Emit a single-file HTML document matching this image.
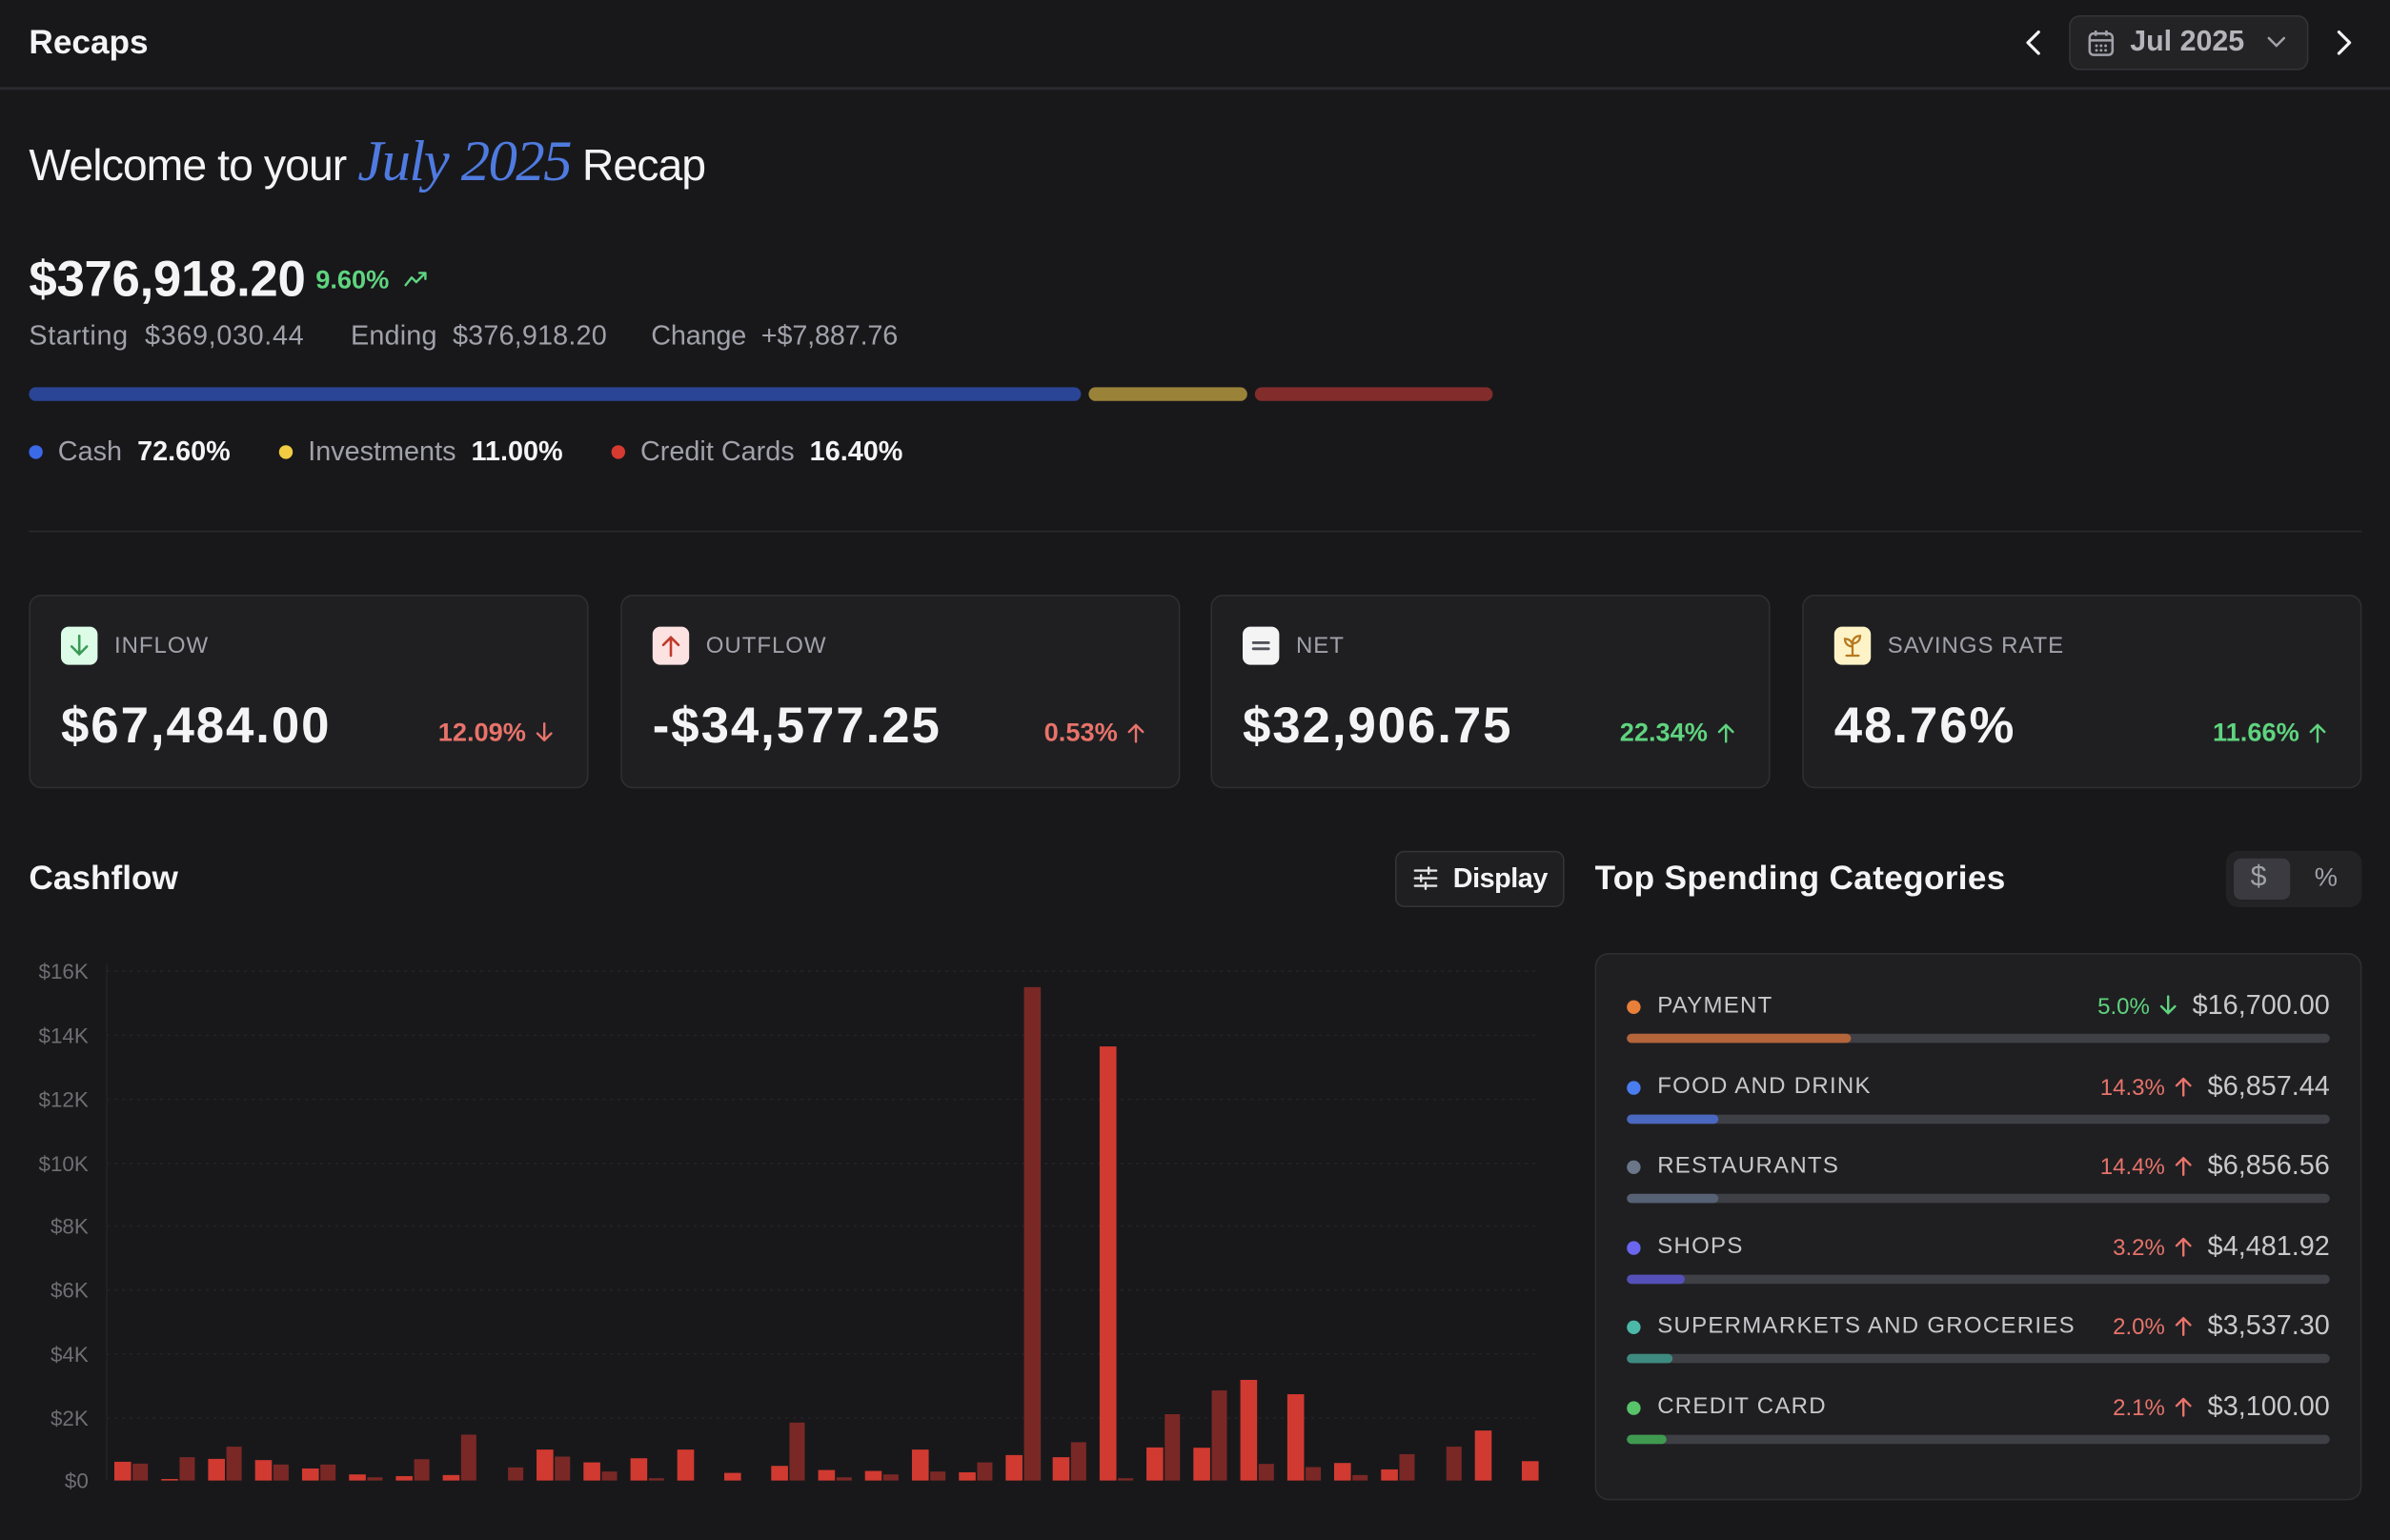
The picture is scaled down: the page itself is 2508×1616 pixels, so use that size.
<!DOCTYPE html>
<html><head><meta charset="utf-8"><style>
*{margin:0;padding:0;box-sizing:border-box}
html,body{width:2508px;height:1616px;background:#18181b;overflow:hidden}
#r{position:absolute;left:0;top:0;width:1568px;height:1010px;transform:scale(1.6);transform-origin:0 0;font-family:"Liberation Sans",Arial,sans-serif;color:#f4f4f5}
.a{position:absolute;white-space:nowrap}
.g{color:#a1a1aa}
.card{position:absolute;top:390px;width:367px;height:127px;background:#1f1f22;border:1px solid #2e2e33;border-radius:8px}
.ic{position:absolute;left:20px;top:20px;width:24px;height:25px;border-radius:5px}
.lab{position:absolute;left:55px;top:24px;font-size:15px;color:#a1a1aa;letter-spacing:.6px}
.val{position:absolute;left:20px;top:66px;font-size:33px;font-weight:bold;color:#f4f4f5;letter-spacing:1.2px}
.pct{position:absolute;right:22px;top:80px;font-size:17px;font-weight:bold}
.ar{display:inline-block;vertical-align:-2px;margin-left:6px}
.row{position:absolute;left:20px;right:20px;height:40px}
.row .dot{position:absolute;left:0;top:7px;width:9px;height:9px;border-radius:50%}
.row .nm{position:absolute;left:20px;top:2px;font-size:15px;color:#c8c8cc;letter-spacing:.8px}
.row .rt{position:absolute;right:0;top:0;font-size:18px;color:#c8c8cc}
.row .rt span{font-size:15px;margin-right:10px}
.row .tr{position:absolute;left:0;right:0;top:29px;height:6px;border-radius:3px;background:#3f3f46}
.row .fl{position:absolute;left:0;top:0;height:6px;border-radius:3px}
.red{color:#e8736a}.grn{color:#5fd47f}
</style></head><body><div id="r">
<svg width="0" height="0" style="position:absolute"><defs>
<symbol id="up" viewBox="0 0 12 14"><path d="M6 13 V2 M1.5 6.5 L6 2 L10.5 6.5" fill="none" stroke="currentColor" stroke-width="1.5" stroke-linecap="round" stroke-linejoin="round"/></symbol>
<symbol id="dn" viewBox="0 0 12 14"><path d="M6 1 V12 M1.5 7.5 L6 12 L10.5 7.5" fill="none" stroke="currentColor" stroke-width="1.5" stroke-linecap="round" stroke-linejoin="round"/></symbol>
</defs></svg>
<div class="a" style="left:19px;top:15px;font-size:22px;font-weight:bold">Recaps</div>
<svg class="a" style="left:1326px;top:19px" width="16" height="18" viewBox="0 0 16 18"><path d="M11 2 L4 9 L11 16" fill="none" stroke="#f4f4f5" stroke-width="2" stroke-linecap="round" stroke-linejoin="round"/></svg>
<div class="a" style="left:1357px;top:10px;width:157px;height:36px;background:#232326;border:1px solid #333338;border-radius:7px"></div>
<svg class="a" style="left:1369px;top:19px" width="18" height="19" viewBox="0 0 18 19"><rect x="1.5" y="3" width="15" height="14" rx="2.5" fill="none" stroke="#a1a1aa" stroke-width="1.6"/><line x1="1.5" y1="7.5" x2="16.5" y2="7.5" stroke="#a1a1aa" stroke-width="1.6"/><line x1="5.5" y1="1" x2="5.5" y2="4.5" stroke="#a1a1aa" stroke-width="1.6"/><line x1="12.5" y1="1" x2="12.5" y2="4.5" stroke="#a1a1aa" stroke-width="1.6"/><g fill="#a1a1aa"><circle cx="6" cy="11" r=".9"/><circle cx="9" cy="11" r=".9"/><circle cx="12" cy="11" r=".9"/><circle cx="6" cy="14" r=".9"/><circle cx="9" cy="14" r=".9"/><circle cx="12" cy="14" r=".9"/></g></svg>
<div class="a" style="left:1397px;top:17px;font-size:19px;color:#b4b4ba;font-weight:bold">Jul 2025</div>
<svg class="a" style="left:1486px;top:22px" width="14" height="10" viewBox="0 0 14 10"><path d="M2 3 L7 8 L12 3" fill="none" stroke="#a1a1aa" stroke-width="1.6" stroke-linecap="round"/></svg>
<svg class="a" style="left:1529px;top:19px" width="16" height="18" viewBox="0 0 16 18"><path d="M5 2 L12 9 L5 16" fill="none" stroke="#f4f4f5" stroke-width="2" stroke-linecap="round" stroke-linejoin="round"/></svg>
<div class="a" style="left:0;top:57px;width:1568px;height:2px;background:#2a2a2e"></div>

<div class="a" style="left:19px;top:84px;font-size:29px;letter-spacing:-.6px">Welcome to your <span style="font-family:'Liberation Serif',serif;font-style:italic;color:#4f7be0;font-size:38px;letter-spacing:-1px">July 2025</span> Recap</div>

<div class="a" style="left:19px;top:164px;font-size:33px;font-weight:bold;letter-spacing:-.2px">$376,918.20</div>
<div class="a grn" style="left:207px;top:174px;font-size:17px;font-weight:bold">9.60%</div>
<svg class="a" style="left:264px;top:176px" width="18" height="14" viewBox="0 0 18 14"><path d="M2 11 L6 6 L9 9 L15 3 M11 3 H15 V7" fill="none" stroke="#5fd47f" stroke-width="1.5" stroke-linecap="round" stroke-linejoin="round"/></svg>
<div class="a g" style="left:19px;top:210px;font-size:18px;letter-spacing:.4px">Starting&nbsp; $369,030.44</div>
<div class="a g" style="left:230px;top:210px;font-size:18px;letter-spacing:.1px">Ending&nbsp; $376,918.20</div>
<div class="a g" style="left:427px;top:210px;font-size:18px;letter-spacing:-.1px">Change&nbsp; +$7,887.76</div>

<div class="a" style="left:19px;top:254px;width:690px;height:9px;border-radius:5px;background:#2b4596"></div>
<div class="a" style="left:714px;top:254px;width:104px;height:9px;border-radius:5px;background:#9a8338"></div>
<div class="a" style="left:823px;top:254px;width:156px;height:9px;border-radius:5px;background:#832c2c"></div>

<div class="a" style="left:19px;top:292px;width:9px;height:9px;border-radius:50%;background:#3b6ae8"></div>
<div class="a" style="left:38px;top:286px;font-size:18px"><span class="g">Cash</span>&nbsp; <b>72.60%</b></div>
<div class="a" style="left:183px;top:292px;width:9px;height:9px;border-radius:50%;background:#f2cc42"></div>
<div class="a" style="left:202px;top:286px;font-size:18px"><span class="g">Investments</span>&nbsp; <b>11.00%</b></div>
<div class="a" style="left:401px;top:292px;width:9px;height:9px;border-radius:50%;background:#d73a30"></div>
<div class="a" style="left:420px;top:286px;font-size:18px"><span class="g">Credit Cards</span>&nbsp; <b>16.40%</b></div>
<div class="a" style="left:19px;top:348px;width:1530px;height:1px;background:#2a2a2e"></div>

<div class="card" style="left:19px"><div class="ic" style="background:#dcfce7"><svg width="24" height="25" viewBox="0 0 24 25"><path d="M12 6 V18 M7 13 L12 18 L17 13" fill="none" stroke="#3a9a55" stroke-width="1.6" stroke-linecap="round"/></svg></div><div class="lab">INFLOW</div><div class="val">$67,484.00</div><div class="pct red">12.09%<svg class="ar" width="12" height="15"><use href="#dn"/></svg></div></div>
<div class="card" style="left:407px"><div class="ic" style="background:#fde2e2"><svg width="24" height="25" viewBox="0 0 24 25"><path d="M12 19 V7 M7 12 L12 7 L17 12" fill="none" stroke="#c0392b" stroke-width="1.6" stroke-linecap="round"/></svg></div><div class="lab">OUTFLOW</div><div class="val">-$34,577.25</div><div class="pct red">0.53%<svg class="ar" width="12" height="15"><use href="#up"/></svg></div></div>
<div class="card" style="left:794px"><div class="ic" style="background:#f4f4f5"><svg width="24" height="25" viewBox="0 0 24 25"><path d="M7 10.5 H17 M7 14.5 H17" stroke="#52525b" stroke-width="1.8" stroke-linecap="round"/></svg></div><div class="lab">NET</div><div class="val">$32,906.75</div><div class="pct grn">22.34%<svg class="ar" width="12" height="15"><use href="#up"/></svg></div></div>
<div class="card" style="left:1182px"><div class="ic" style="background:#fef3c7"><svg width="24" height="25" viewBox="0 0 24 25"><path d="M12 19 V11 M12 13 C12 9 9 8 7 8 C7 11 9 13 12 13 M12 11 C12 8 14 6 17 6 C17 9 15 11 12 11 M8 19 H16" fill="none" stroke="#b7791f" stroke-width="1.4" stroke-linecap="round"/></svg></div><div class="lab">SAVINGS RATE</div><div class="val">48.76%</div><div class="pct grn">11.66%<svg class="ar" width="12" height="15"><use href="#up"/></svg></div></div>

<div class="a" style="left:19px;top:563px;font-size:22px;font-weight:bold">Cashflow</div>
<div class="a" style="left:915px;top:558px;width:111px;height:37px;background:#1f1f22;border:1px solid #333338;border-radius:6px"></div>
<svg class="a" style="left:926px;top:567px" width="18" height="18" viewBox="0 0 18 18"><g stroke="#e4e4e7" stroke-width="1.5" stroke-linecap="round"><path d="M2 4 H16 M2 9 H16 M2 14 H16"/><path d="M11 2 V6 M6 7 V11 M9 12 V16"/></g></svg>
<div class="a" style="left:953px;top:566px;font-size:18px;font-weight:bold;letter-spacing:-.3px">Display</div>

<div class="a" style="left:1046px;top:563px;font-size:22px;font-weight:bold;letter-spacing:.2px">Top Spending Categories</div>
<div class="a" style="left:1460px;top:558px;width:89px;height:37px;background:#232326;border-radius:8px"></div>
<div class="a" style="left:1465px;top:563px;width:37px;height:27px;background:#3a3a40;border-radius:5px"></div>
<div class="a" style="left:1476px;top:565px;font-size:19px;color:#a1a1aa">$</div>
<div class="a" style="left:1518px;top:566px;font-size:17px;color:#a1a1aa">%</div>

<div class="a" style="left:1046px;top:625px;width:503px;height:359px;background:#1f1f22;border:1px solid #2e2e33;border-radius:9px">
<div class="row" style="top:23px"><div class="dot" style="background:#e8803a"></div><div class="nm">PAYMENT</div><div class="rt"><span class="grn">5.0%<svg class="ar" width="12" height="15"><use href="#dn"/></svg></span>$16,700.00</div><div class="tr"><div class="fl" style="width:147px;background:#b4663a"></div></div></div>
<div class="row" style="top:75.5px"><div class="dot" style="background:#4a7ef0"></div><div class="nm">FOOD AND DRINK</div><div class="rt"><span class="red">14.3%<svg class="ar" width="12" height="15"><use href="#up"/></svg></span>$6,857.44</div><div class="tr"><div class="fl" style="width:60px;background:#4a68c0"></div></div></div>
<div class="row" style="top:128px"><div class="dot" style="background:#6b7688"></div><div class="nm">RESTAURANTS</div><div class="rt"><span class="red">14.4%<svg class="ar" width="12" height="15"><use href="#up"/></svg></span>$6,856.56</div><div class="tr"><div class="fl" style="width:60px;background:#566173"></div></div></div>
<div class="row" style="top:180.5px"><div class="dot" style="background:#6a66ee"></div><div class="nm">SHOPS</div><div class="rt"><span class="red">3.2%<svg class="ar" width="12" height="15"><use href="#up"/></svg></span>$4,481.92</div><div class="tr"><div class="fl" style="width:38px;background:#5550b8"></div></div></div>
<div class="row" style="top:233px"><div class="dot" style="background:#4cb8a8"></div><div class="nm">SUPERMARKETS AND GROCERIES</div><div class="rt"><span class="red">2.0%<svg class="ar" width="12" height="15"><use href="#up"/></svg></span>$3,537.30</div><div class="tr"><div class="fl" style="width:30px;background:#3e8a80"></div></div></div>
<div class="row" style="top:285.5px"><div class="dot" style="background:#58c46a"></div><div class="nm">CREDIT CARD</div><div class="rt"><span class="red">2.1%<svg class="ar" width="12" height="15"><use href="#up"/></svg></span>$3,100.00</div><div class="tr"><div class="fl" style="width:26px;background:#3f9a50"></div></div></div>
</div>

<svg class="a" style="left:0;top:0" width="1040" height="1010" viewBox="0 0 1040 1010">
<g stroke="#232327" stroke-width="1" stroke-dasharray="2 3"><path d="M70 637H1010M70 679H1010M70 721H1010M70 763H1010M70 804H1010M70 846H1010M70 888H1010M70 930H1010"/></g>
<line x1="70" y1="632" x2="70" y2="971" stroke="#232327"/>
<g font-family="Liberation Sans,Arial,sans-serif" font-size="14" fill="#6e6e74" text-anchor="end">
<text x="58" y="642">$16K</text><text x="58" y="684">$14K</text><text x="58" y="726">$12K</text><text x="58" y="768">$10K</text><text x="58" y="809">$8K</text><text x="58" y="851">$6K</text><text x="58" y="893">$4K</text><text x="58" y="935">$2K</text><text x="58" y="976">$0</text></g>
<g fill="#d13a30">
<rect x="75" y="958.7" width="11" height="12.3"/><rect x="105.8" y="970" width="11" height="1"/><rect x="136.5" y="956.8" width="11" height="14.2"/><rect x="167.3" y="957.6" width="11" height="13.4"/><rect x="198.1" y="963.1" width="11" height="7.9"/><rect x="228.9" y="967" width="11" height="4"/><rect x="259.6" y="968.1" width="11" height="2.9"/><rect x="290.4" y="967.4" width="11" height="3.6"/><rect x="351.9" y="950.7" width="11" height="20.3"/><rect x="382.7" y="959.1" width="11" height="11.9"/><rect x="413.5" y="956.4" width="11" height="14.6"/><rect x="444.2" y="950.7" width="11" height="20.3"/><rect x="475" y="966" width="11" height="5"/><rect x="505.8" y="961.4" width="11" height="9.6"/><rect x="536.6" y="964.1" width="11" height="6.9"/><rect x="567.3" y="964.7" width="11" height="6.3"/><rect x="598.1" y="950.7" width="11" height="20.3"/><rect x="628.9" y="965.6" width="11" height="5.4"/><rect x="659.6" y="954.3" width="11" height="16.7"/><rect x="690.4" y="955.7" width="11" height="15.3"/><rect x="721.2" y="686.3" width="11" height="284.7"/><rect x="751.9" y="949.3" width="11" height="21.7"/><rect x="782.7" y="949.5" width="11" height="21.5"/><rect x="813.5" y="905" width="11" height="66"/><rect x="844.3" y="914.4" width="11" height="56.6"/><rect x="875" y="959.5" width="11" height="11.5"/><rect x="905.8" y="963.7" width="11" height="7.3"/><rect x="967.3" y="938.2" width="11" height="32.8"/><rect x="998.1" y="958.3" width="11" height="12.7"/>
</g>
<g fill="#7a2826">
<rect x="87" y="959.9" width="10" height="11.1"/><rect x="117.8" y="955.7" width="10" height="15.3"/><rect x="148.5" y="948.8" width="10" height="22.2"/><rect x="179.3" y="960.5" width="10" height="10.5"/><rect x="210.1" y="960.5" width="10" height="10.5"/><rect x="240.9" y="968.9" width="10" height="2.1"/><rect x="271.6" y="957" width="10" height="14"/><rect x="302.4" y="940.9" width="10" height="30.1"/><rect x="333.2" y="962.4" width="10" height="8.6"/><rect x="363.9" y="955.3" width="10" height="15.7"/><rect x="394.7" y="965.1" width="10" height="5.9"/><rect x="425.5" y="969.5" width="10" height="1.5"/><rect x="517.8" y="933" width="10" height="38"/><rect x="548.6" y="968.9" width="10" height="2.1"/><rect x="579.3" y="967" width="10" height="4"/><rect x="610.1" y="965.1" width="10" height="5.9"/><rect x="640.9" y="959.1" width="10" height="11.9"/><rect x="671.6" y="647.4" width="11" height="323.6"/><rect x="702.4" y="945.9" width="10" height="25.1"/><rect x="733.2" y="969.5" width="10" height="1.5"/><rect x="763.9" y="927.5" width="10" height="43.5"/><rect x="794.7" y="911.9" width="10" height="59.1"/><rect x="825.5" y="960.1" width="10" height="10.9"/><rect x="856.3" y="962.2" width="10" height="8.8"/><rect x="887" y="967.4" width="10" height="3.6"/><rect x="917.8" y="953.7" width="10" height="17.3"/><rect x="948.6" y="948.8" width="10" height="22.2"/>
</g>
</svg>
</div></body></html>
